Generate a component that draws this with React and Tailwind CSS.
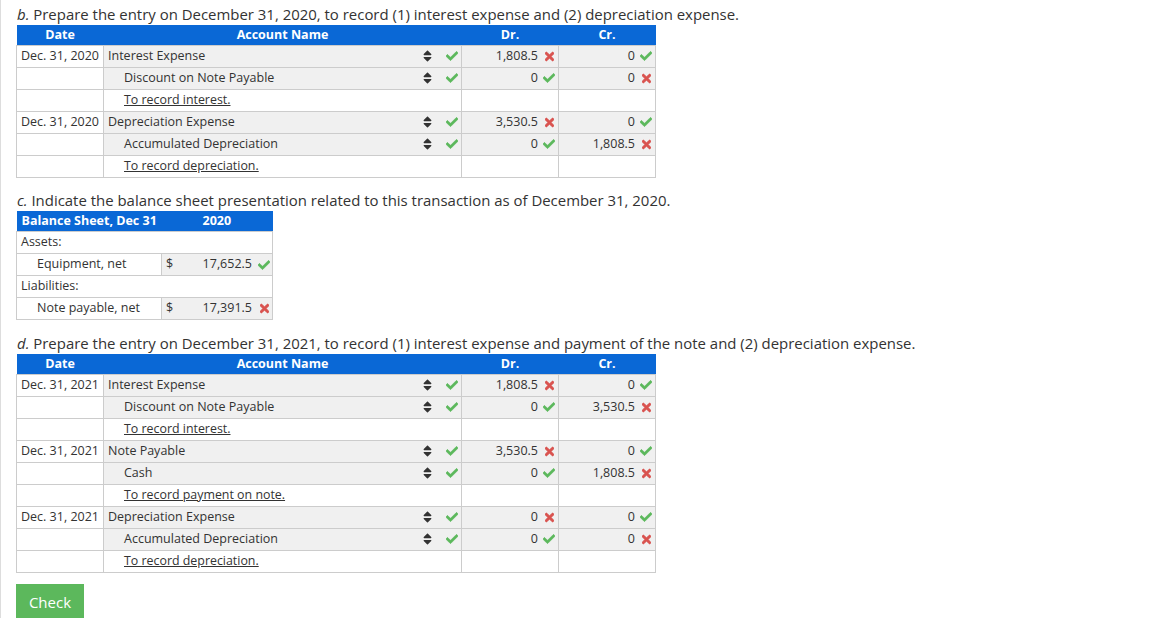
import React from 'react';
import { FaCheck, FaTimes, FaSort } from 'react-icons/fa';

const Mark = ({ ok }) => (
  <span className="w-[12px] h-[14px] flex items-center justify-center shrink-0">
    {ok ? (
      <FaCheck className="w-[12px] h-[12px] text-[#5cb85c] stroke-[25]" />
    ) : (
      <FaTimes className="w-[9px] h-[13px] text-[#d9534f] stroke-[25]" />
    )}
  </span>
);

const Amount = ({ value, ok }) => (
  <td className="border border-[#ccc] bg-[#f0f0f0] p-0">
    <div className="flex items-center justify-end gap-[5px] pr-[3px]">
      <span>{value}</span>
      <Mark ok={ok} />
    </div>
  </td>
);

const EntryRow = ({ date, name, indent, dr, cr }) => (
  <tr className="h-[22px]">
    <td className="border border-[#ccc] text-center p-0 whitespace-nowrap">{date}</td>
    <td className="border border-[#ccc] bg-[#f0f0f0] p-0">
      <div className="flex items-center justify-between pr-[3px]">
        <span className={indent ? 'pl-[20px]' : 'pl-[4px]'}>{name}</span>
        <div className="flex items-center gap-[14px]">
          <FaSort className="w-[9px] h-[14px] text-[#333]" />
          <Mark ok />
        </div>
      </div>
    </td>
    <Amount value={dr[0]} ok={dr[1]} />
    <Amount value={cr[0]} ok={cr[1]} />
  </tr>
);

const NoteRow = ({ text }) => (
  <tr className="h-[22px]">
    <td className="border border-[#ccc] p-0" />
    <td className="border border-[#ccc] p-0 pl-[20px]">
      <span className="underline text-[12.4px]">{text}</span>
    </td>
    <td className="border border-[#ccc] p-0" />
    <td className="border border-[#ccc] p-0" />
  </tr>
);

const JournalTable = ({ entries }) => (
  <table className="table-fixed border-collapse w-[639px] text-[12.5px]">
    <colgroup>
      <col className="w-[87px]" />
      <col className="w-[358px]" />
      <col className="w-[97px]" />
      <col className="w-[97px]" />
    </colgroup>
    <thead>
      <tr className="h-[20px] bg-[#0a68d6] text-white font-bold text-center leading-[18px]">
        <th className="p-0 pt-px">Date</th>
        <th className="p-0 pt-px">Account Name</th>
        <th className="p-0 pt-px">Dr.</th>
        <th className="p-0 pt-px">Cr.</th>
      </tr>
    </thead>
    <tbody>
      {entries.map((e, i) => (
        <React.Fragment key={i}>
          <EntryRow date={e.date} name={e.debit} dr={e.rows[0]} cr={e.rows[1]} />
          <EntryRow indent name={e.credit} dr={e.rows[2]} cr={e.rows[3]} />
          <NoteRow text={e.note} />
        </React.Fragment>
      ))}
    </tbody>
  </table>
);

const partB = [
  {
    date: 'Dec. 31, 2020', debit: 'Interest Expense', credit: 'Discount on Note Payable', note: 'To record interest.',
    rows: [['1,808.5', false], ['0', true], ['0', true], ['0', false]],
  },
  {
    date: 'Dec. 31, 2020', debit: 'Depreciation Expense', credit: 'Accumulated Depreciation', note: 'To record depreciation.',
    rows: [['3,530.5', false], ['0', true], ['0', true], ['1,808.5', false]],
  },
];

const partD = [
  {
    date: 'Dec. 31, 2021', debit: 'Interest Expense', credit: 'Discount on Note Payable', note: 'To record interest.',
    rows: [['1,808.5', false], ['0', true], ['0', true], ['3,530.5', false]],
  },
  {
    date: 'Dec. 31, 2021', debit: 'Note Payable', credit: 'Cash', note: 'To record payment on note.',
    rows: [['3,530.5', false], ['0', true], ['0', true], ['1,808.5', false]],
  },
  {
    date: 'Dec. 31, 2021', debit: 'Depreciation Expense', credit: 'Accumulated Depreciation', note: 'To record depreciation.',
    rows: [['0', false], ['0', true], ['0', true], ['0', false]],
  },
];

const SheetLabel = ({ text }) => (
  <tr className="h-[22px]">
    <td colSpan={3} className="border border-[#ccc] p-0 pl-[4px]">{text}</td>
  </tr>
);

const SheetRow = ({ name, value, ok }) => (
  <tr className="h-[22px]">
    <td className="border border-[#ccc] p-0 pl-[20px]">{name}</td>
    <td className="border-y border-[#ccc] bg-[#f0f0f0] p-0 pl-[4px]">$</td>
    <td className="border-y border-r border-[#ccc] bg-[#f0f0f0] p-0">
      <div className="flex items-center justify-end gap-[6px] pr-[2px]">
        <span>{value}</span>
        <Mark ok={ok} />
      </div>
    </td>
  </tr>
);

const Heading = ({ letter, children, className }) => (
  <p className={`text-[14.95px] leading-[18px] pl-px text-[#333] ${className}`}>
    <em>{letter}.</em> {children}
  </p>
);

export default function App() {
  return (
    <div className="h-[618px] overflow-hidden bg-white border-l border-[#ddd] pl-[15px] text-[#333] font-['Open_Sans',sans-serif]">
      <Heading letter="b" className="pt-[5px] mb-[2px]">
        Prepare the entry on December 31, 2020, to record (1) interest expense and (2) depreciation expense.
      </Heading>
      <JournalTable entries={partB} />
      <Heading letter="c" className="pt-[13px] mb-[2px]">
        Indicate the balance sheet presentation related to this transaction as of December 31, 2020.
      </Heading>
      <table className="table-fixed border-collapse w-[256px] text-[12.5px]">
        <colgroup>
          <col className="w-[145px]" />
          <col className="w-[30px]" />
          <col className="w-[81px]" />
        </colgroup>
        <thead>
          <tr className="h-[21px] bg-[#0a68d6] text-white font-bold leading-[18px]">
            <th className="p-0 pl-[5px] text-left whitespace-nowrap">Balance Sheet, Dec 31</th>
            <th colSpan={2} className="p-0 text-left pl-[41px]">2020</th>
          </tr>
        </thead>
        <tbody>
          <SheetLabel text="Assets:" />
          <SheetRow name="Equipment, net" value="17,652.5" ok />
          <SheetLabel text="Liabilities:" />
          <SheetRow name="Note payable, net" value="17,391.5" />
        </tbody>
      </table>
      <Heading letter="d" className="pt-[14px] mb-[2px]">
        Prepare the entry on December 31, 2021, to record (1) interest expense and payment of the note and (2) depreciation expense.
      </Heading>
      <JournalTable entries={partD} />
      <button className="mt-[11px] pt-[3px] block w-[68px] h-[34px] bg-[#5cb85c] text-white text-[15px]">Check</button>
    </div>
  );
}
